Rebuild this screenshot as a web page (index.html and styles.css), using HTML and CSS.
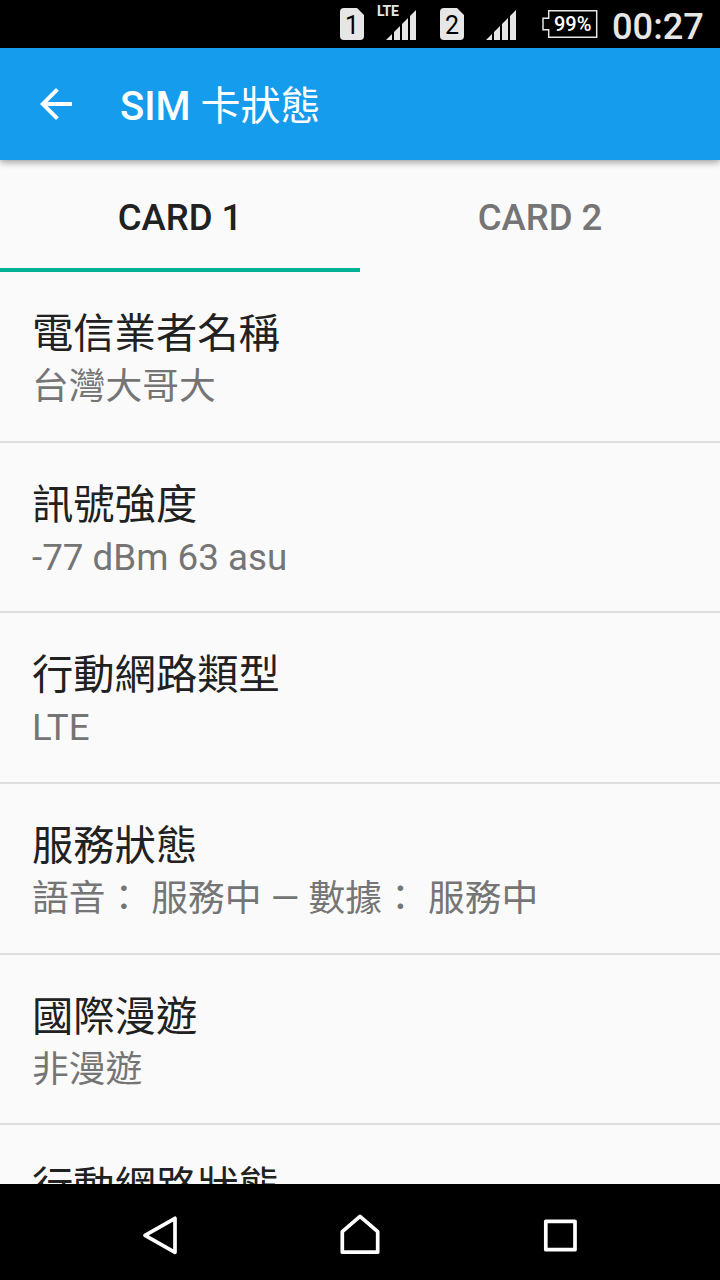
FILE: index.html
```html
<!DOCTYPE html>
<html lang="zh-Hant">
<head>
  <meta charset="UTF-8" />
  <meta name="viewport" content="width=device-width, initial-scale=1.0" />
  <title>SIM 卡狀態</title>
  <link rel="stylesheet" href="styles.css">
</head>
<body>
  <div class="status-bar">
    <div class="sim">1</div>
    <div class="network">
      <span class="lte">LTE</span>
      <svg class="signal" width="30" height="30" viewBox="0 0 30 30"><path d="M0 30L6 24V30ZM8 22L14 16V30H8ZM16 14L22 8V30H16ZM24 6L30 0V30H24Z" fill="#e6e6e6"/></svg>
    </div>
    <div class="sim sim-2">2</div>
    <svg class="signal signal-2" width="30" height="30" viewBox="0 0 30 30"><path d="M0 30L6 24V30ZM8 22L14 16V30H8ZM16 14L22 8V30H16ZM24 6L30 0V30H24Z" fill="#e6e6e6"/></svg>
    <div class="battery">
      <svg width="56" height="28" viewBox="0 0 56 28"><path d="M6.7 .8H54.7V27.2H6.7V19.8H1V8.2H6.7Z" fill="none" stroke="#e6e6e6" stroke-width="1.5"/></svg>
      <span class="percent">99%</span>
    </div>
    <div class="clock">00:27</div>
  </div>

  <header class="app-bar">
    <svg class="back" width="32" height="32" viewBox="0 0 32 32"><path d="M32 14H7.6L18.8 2.8L16 0L0 16L16 32L18.8 29.2L7.6 18H32Z" fill="#fff"/></svg>
    <h1>SIM <span>卡狀態</span></h1>
  </header>

  <nav class="tabs">
    <div class="tab active">CARD 1</div>
    <div class="tab">CARD 2</div>
  </nav>

  <ul class="list">
    <li>
      <div class="title">電信業者名稱</div>
      <div class="value">台灣大哥大</div>
    </li>
    <li>
      <div class="title">訊號強度</div>
      <div class="value latin">-77 dBm 63 asu</div>
    </li>
    <li>
      <div class="title">行動網路類型</div>
      <div class="value latin">LTE</div>
    </li>
    <li>
      <div class="title">服務狀態</div>
      <div class="value">語音： 服務中 — 數據： 服務中</div>
    </li>
    <li>
      <div class="title">國際漫遊</div>
      <div class="value">非漫遊</div>
    </li>
    <li>
      <div class="title">行動網路狀態</div>
    </li>
  </ul>

  <footer class="nav-bar">
    <svg width="40" height="44" viewBox="0 0 40 44"><path d="M5 22.3L35 5.3V39.3Z"/></svg>
    <svg width="40" height="44" viewBox="0 0 40 44"><path d="M2.3 39.2V18.7L20 3.4L37.7 18.7V39.2Z"/></svg>
    <svg width="40" height="44" viewBox="0 0 40 44"><path d="M5.8 8.3H35V36.7H5.8Z"/></svg>
  </footer>
</body>
</html>
```

FILE: styles.css
```css
* {
  box-sizing: border-box;
}
body {
  margin: 0;
  width: 720px;
  height: 1280px;
  overflow: hidden;
  display: flex;
  flex-direction: column;
  background: #fafafa;
  color: #212121;
  font-family: Roboto, "Noto Sans CJK TC", sans-serif;
}
svg {
  display: block;
}

/* status bar */
.status-bar {
  height: 48px;
  flex: none;
  display: flex;
  align-items: flex-start;
  padding-left: 340px;
  background: #000;
  color: #e6e6e6;
}
.sim {
  width: 24px;
  height: 32px;
  margin-top: 8px;
  background: #e6e6e6;
  border-radius: 4px;
  clip-path: polygon(0 0, 17px 0, 24px 7px, 24px 32px, 0 32px);
  color: #000;
  font-size: 25px;
  line-height: 36px;
  text-align: center;
}
.network {
  position: relative;
  margin-left: 22px;
}
.lte {
  position: absolute;
  left: -9px;
  top: 3px;
  font-size: 14px;
  line-height: 16px;
  font-weight: 700;
  letter-spacing: -0.4px;
}
.signal {
  margin-top: 10px;
}
.sim-2 {
  margin-left: 24px;
}
.signal-2 {
  margin-left: 22px;
}
.battery {
  position: relative;
  margin: 10px 0 0 26px;
}
.percent {
  position: absolute;
  left: 12px;
  top: 2px;
  color: #fff;
  font-size: 20px;
  line-height: 24px;
  font-weight: 500;
}
.clock {
  margin-left: 14px;
  font-size: 36.2px;
  line-height: 54px;
  font-weight: 500;
}

/* app bar */
.app-bar {
  position: relative;
  height: 112px;
  flex: none;
  display: flex;
  align-items: center;
  padding-left: 40px;
  background: #169cec;
  color: #fff;
  box-shadow: 0 2px 7px rgba(0, 0, 0, 0.4);
}
.app-bar h1 {
  margin: 0 0 0 48px;
  padding-top: 6px;
  font-size: 40px;
  line-height: 60px;
  font-weight: 500;
}
.app-bar h1 span {
  font-weight: 400;
}

/* tabs */
.tabs {
  height: 112px;
  flex: none;
  display: flex;
}
.tab {
  flex: 1;
  padding-top: 4px;
  border-bottom: 4px solid transparent;
  color: #757575;
  font-size: 36.5px;
  line-height: 108px;
  font-weight: 500;
  text-align: center;
}
.tab.active {
  color: #212121;
  border-color: #00b294;
}

/* settings list */
.list {
  flex: 1;
  min-height: 0;
  overflow: hidden;
  margin: 0;
  padding: 0;
  list-style: none;
}
.list li {
  height: 170.67px;
  padding: 35px 32px 0;
  border-bottom: 2px solid #dedede;
}
.title {
  font-size: 41.3px;
  line-height: 54px;
}
.value {
  color: #757575;
  font-size: 36.75px;
  line-height: 51px;
  white-space: nowrap;
}

/* navigation bar */
.nav-bar {
  height: 96px;
  flex: none;
  display: flex;
  justify-content: space-between;
  padding: 29px 140px 0;
  background: #000;
}
.nav-bar path {
  fill: none;
  stroke: #fff;
  stroke-width: 3.7;
  stroke-linejoin: round;
}
```
